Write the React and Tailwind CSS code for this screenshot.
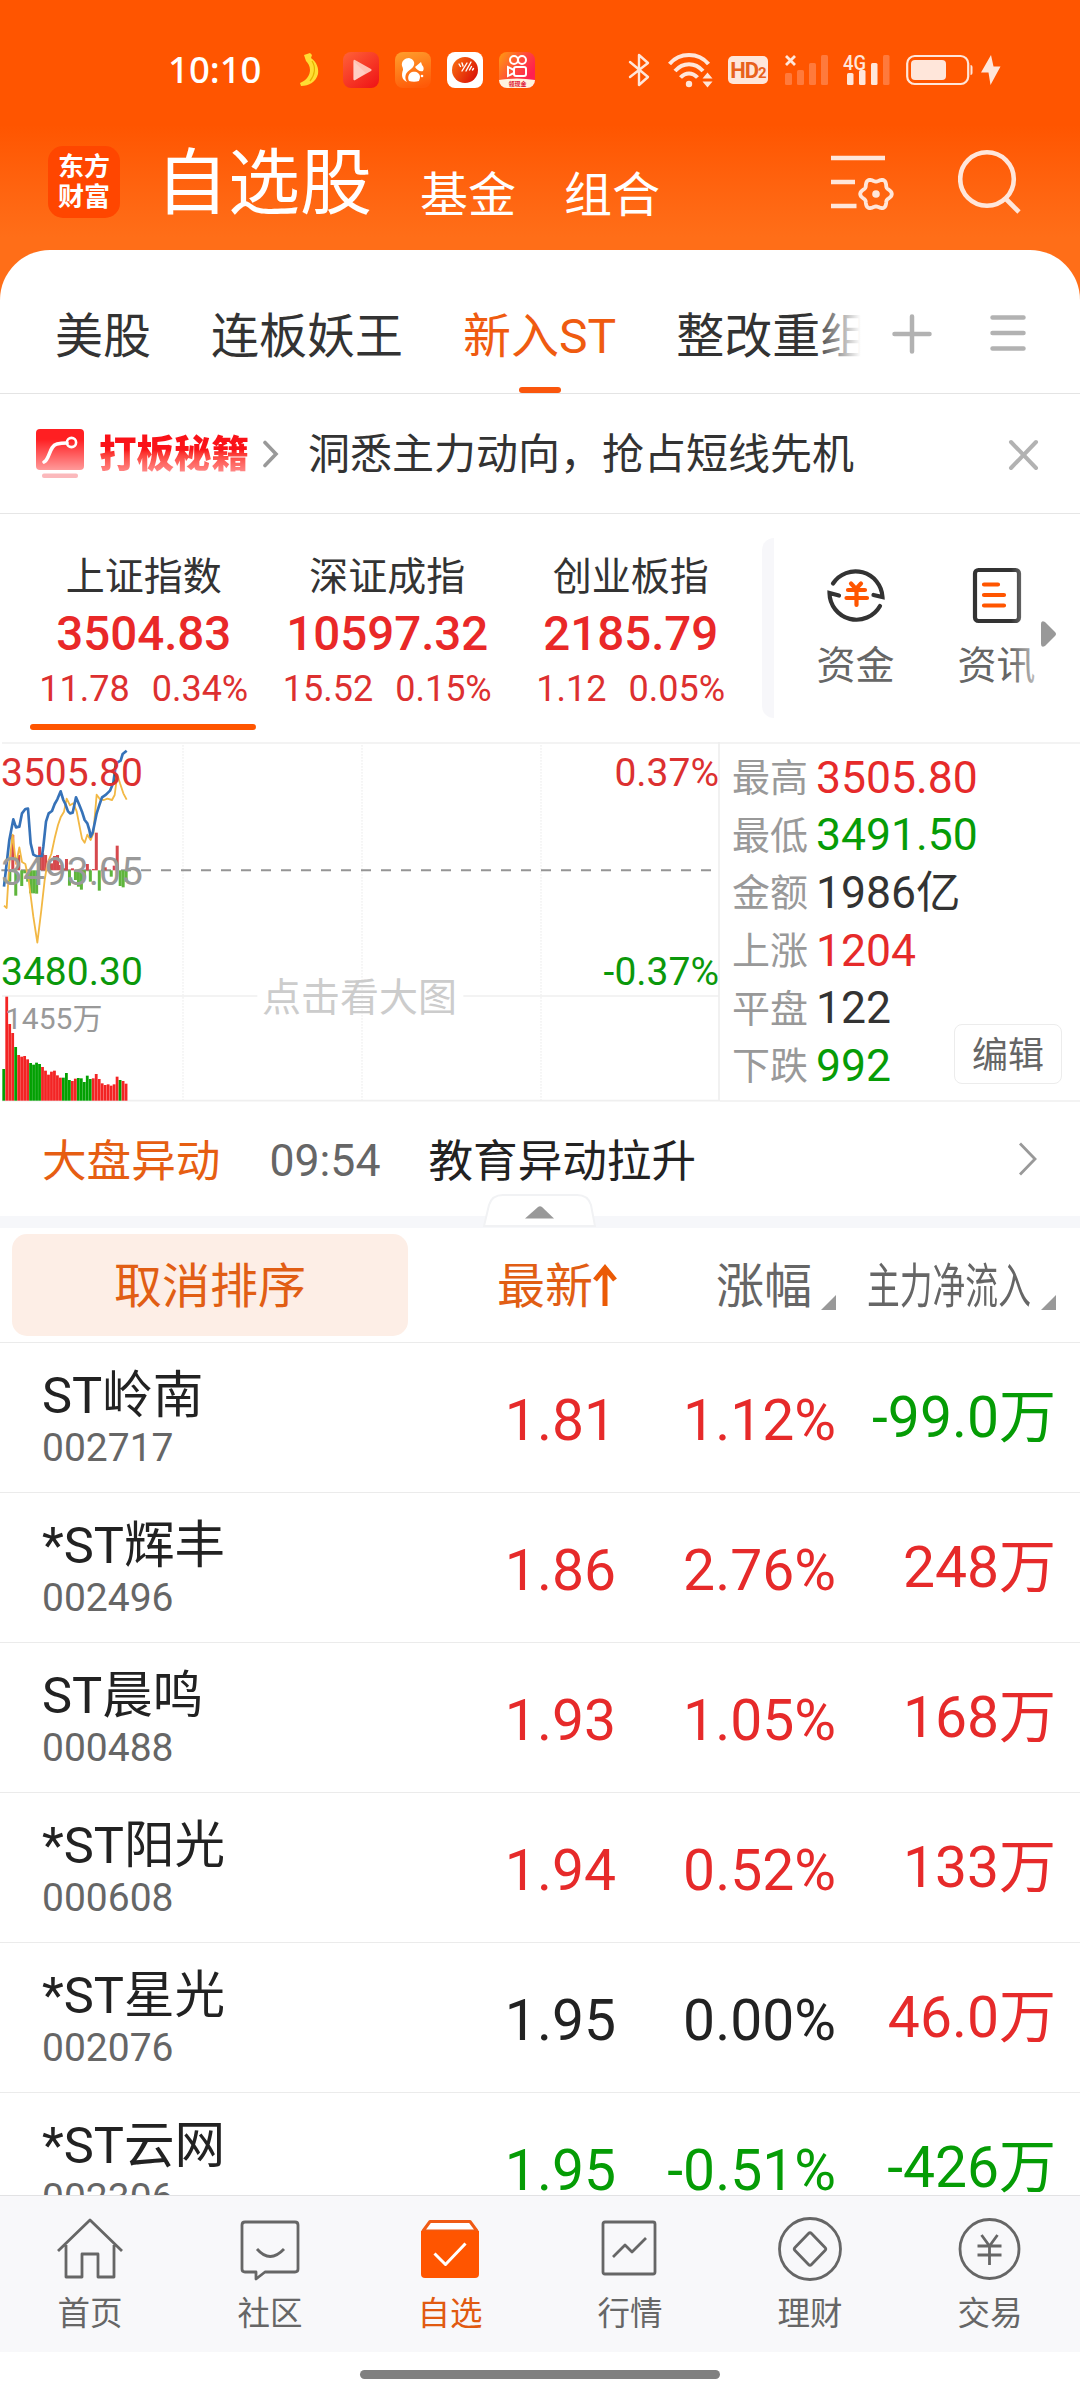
const TABS = ['美股', '连板妖王', '新入ST', '整改重组']

const INDICES = [
  { name: '上证指数', value: '3504.83', diff: '11.78', pct: '0.34%', active: true },
  { name: '深证成指', value: '10597.32', diff: '15.52', pct: '0.15%' },
  { name: '创业板指', value: '2185.79', diff: '1.12', pct: '0.05%' },
]

const STATS = [
  { label: '最高', value: '3505.80', color: 'text-[#e62a2a]' },
  { label: '最低', value: '3491.50', color: 'text-[#069c06]' },
  { label: '金额', value: '1986亿', color: 'text-[#333]' },
  { label: '上涨', value: '1204', color: 'text-[#e62a2a]' },
  { label: '平盘', value: '122', color: 'text-[#333]' },
  { label: '下跌', value: '992', color: 'text-[#069c06]' },
]

const RED = 'text-[#e62a2a]'
const GREEN = 'text-[#059c05]'
const BLACK = 'text-[#222]'

const STOCKS = [
  { name: 'ST岭南', code: '002717', price: '1.81', pct: '1.12%', flow: '-99.0万', color: RED, flowColor: GREEN },
  { name: '*ST辉丰', code: '002496', price: '1.86', pct: '2.76%', flow: '248万', color: RED, flowColor: RED },
  { name: 'ST晨鸣', code: '000488', price: '1.93', pct: '1.05%', flow: '168万', color: RED, flowColor: RED },
  { name: '*ST阳光', code: '000608', price: '1.94', pct: '0.52%', flow: '133万', color: RED, flowColor: RED },
  { name: '*ST星光', code: '002076', price: '1.95', pct: '0.00%', flow: '46.0万', color: BLACK, flowColor: RED },
  { name: '*ST云网', code: '002306', price: '1.95', pct: '-0.51%', flow: '-426万', color: GREEN, flowColor: GREEN },
]

// [direction, height] per minute, chart units
const VOLUME = [
  ['g', 95], ['r', 312], ['r', 230], ['r', 203], ['g', 161], ['r', 137], ['r', 132], ['r', 134], ['r', 124],
  ['g', 113], ['g', 108], ['g', 114], ['g', 110], ['r', 101], ['r', 90], ['r', 78], ['r', 87], ['r', 90],
  ['r', 76], ['r', 69], ['g', 69], ['g', 83], ['g', 62], ['r', 59], ['r', 66], ['g', 68], ['g', 67],
  ['g', 56], ['g', 75], ['g', 65], ['r', 67], ['r', 80], ['r', 65], ['r', 52], ['r', 47], ['r', 49],
  ['r', 45], ['r', 49], ['r', 72], ['g', 62], ['r', 59], ['r', 51],
]

const MOMENTUM = [
  0, 0, -34, 106, -76, 46, -47, -9, -34, -69, -69, -70, 71, 51, 46, 26, 21, 43, 46, 16, 6,
  34, -46, 6, -29, -49, -58, -19, 19, -34, 4, 113, -61, 0, 9, 0, -19, 14, 74, -47, -51, -34,
]

const PRICE_LINE =
  '12,470 20,400 28,330 40,268 48,292 58,290 66,250 76,237 84,236 92,340 100,374 112,380 126,378 130,350 138,275 146,250 156,243 164,222 172,208 182,184 190,210 196,222 204,244 210,250 218,248 228,202 238,225 246,245 254,270 262,280 268,300 272,320 278,308 284,280 290,250 298,225 306,202 318,194 330,182 340,158 348,100 362,92 368,72 380,62'

const AVG_LINE =
  '12,527 20,534 28,400 38,314 48,402 58,352 66,396 76,402 86,450 100,560 112,638 124,540 134,450 142,400 154,372 164,325 174,285 182,262 192,245 200,206 210,226 220,220 230,244 240,296 246,326 254,338 262,314 272,330 280,310 290,194 300,208 312,210 322,206 336,210 344,195 352,134 360,160 370,190 380,209'

// six-lobed outline of the settings gear
const GEAR = Array.from({ length: 72 }, (_, i) => {
  const a = (i * Math.PI) / 36
  const r = 14.1 + 1.7 * Math.cos(6 * a)
  return `${(45 + r * Math.cos(a)).toFixed(1)},${(40 + r * Math.sin(a)).toFixed(1)}`
}).join(' ')

function StatusBar() {
  return (
    <div className="flex h-[139px] items-center pl-[168px] text-[#ffe6da]">
      <span className="w-[131px] font-['Noto_Sans',sans-serif] text-[36.500px] font-medium leading-none text-white">10:10</span>
      <svg className="h-[36px] w-[20px]" viewBox="0 0 20 36">
        <path d="M5 3l6-2 2 2-1 3c6 4 8 11 7 16-2 8-9 12-17 12l-1-3c7-3 10-8 10-13 0-4-2-7-4-9z" fill="#ffdd33" />
        <path d="M13 9c4 6 3 14-2 20" stroke="#e5b400" strokeWidth="1.2" fill="none" />
      </svg>
      <svg className="ml-[24px] h-[36px] w-[36px]" viewBox="0 0 36 36">
        <defs>
          <linearGradient id="play" x1="0" y1="0" x2="0.8" y2="1">
            <stop offset="0" stopColor="#ff6238" />
            <stop offset="1" stopColor="#f01818" />
          </linearGradient>
        </defs>
        <rect width="36" height="36" rx="8" fill="url(#play)" />
        <path d="M12 8q-1.500-1-1.500 1v18q0 2 1.500 1l16-9q1.500-1 0-2z" fill="#ffc2b4" />
        <path d="M10.500 9l12 12-10 7q-2 1-2-1z" fill="#ffe0d8" opacity=".45" />
      </svg>
      <svg className="ml-[16px] h-[36px] w-[36px]" viewBox="0 0 36 36">
        <defs>
          <linearGradient id="uc" x1="0.3" y1="0" x2="0.6" y2="1">
            <stop offset="0" stopColor="#ff9a2a" />
            <stop offset="1" stopColor="#ff5a08" />
          </linearGradient>
        </defs>
        <rect width="36" height="36" rx="8" fill="url(#uc)" />
        <path d="M7 14c-1-5 3-8 7-8 4 1 6 4 5 7-1 4-6 5-8 9-1 3-1 5 1 8-5-2-6-7-4-12 0-1 0-2-1-4z" fill="#fff" />
        <path d="M20 15l6-5 1 3c2 2 2 4 1 6-3 1-6-1-8-4z" fill="#fff" />
        <path d="M14 29c-2-4 0-8 3-9 4-1 8 1 8 5 0 2-1 3-1 4-3 1-7 1-10 0z" fill="#fff" />
        <circle cx="27" cy="24" r="1.300" fill="#fff" />
      </svg>
      <svg className="ml-[16px] h-[36px] w-[36px]" viewBox="0 0 36 36">
        <defs>
          <linearGradient id="disc" x1="0" y1="0.2" x2="1" y2="0.8">
            <stop offset="0" stopColor="#f96a10" />
            <stop offset="1" stopColor="#d80f08" />
          </linearGradient>
        </defs>
        <rect width="36" height="36" rx="8" fill="#fff" />
        <circle cx="18" cy="18" r="13" fill="url(#disc)" />
        <path d="M12 12l1.500 2.500M15 11l1 3M15 19l5-8M19 19l5-9M22.500 18l2-3.500M25.500 18l1-1.500" stroke="#fff" strokeWidth="1.400" strokeLinecap="round" />
      </svg>
      <svg className="ml-[16px] h-[36px] w-[36px]" viewBox="0 0 36 36">
        <defs>
          <linearGradient id="ks" x1="0" y1="0" x2="0.9" y2="0.6">
            <stop offset="0" stopColor="#ff9d10" />
            <stop offset="0.6" stopColor="#ff4a3a" />
            <stop offset="1" stopColor="#ff2050" />
          </linearGradient>
        </defs>
        <rect width="36" height="36" rx="8" fill="url(#ks)" />
        <path d="M0 28q18-3 36 0a8 8 0 0 1-8 8H8a8 8 0 0 1-8-8z" fill="#fff3dd" />
        <g fill="none" stroke="#fff" strokeWidth="2">
          <circle cx="15" cy="8" r="4" />
          <circle cx="23" cy="8" r="4" />
          <rect x="15" y="15" width="12" height="9" rx="2" />
          <path d="M15 18l-6-3v9l6-3" />
        </g>
        <text x="9.500" y="33.500" fontSize="6" fontWeight="700" fill="#e0203a">领现金</text>
      </svg>

      <svg className="ml-[93px] h-[34px] w-[22px]" viewBox="0 0 22 34" fill="none" stroke="currentColor" strokeWidth="2.400" strokeLinejoin="round" strokeLinecap="round">
        <path d="M2 9l18 15-9 8V2l9 8L2 24" />
      </svg>
      <svg className="ml-[18px] h-[36px] w-[46px]" viewBox="0 0 46 36" fill="none" stroke="currentColor" strokeWidth="4">
        <path d="M1.500 12c10-12 29-12 39 0M7 19c8-9 20-9 28 0M12.500 25.500c5-5.500 12-5.500 17 0" />
        <circle cx="21" cy="32" r="3.200" fill="currentColor" stroke="none" />
        <path d="M34.500 26.500l5-6 5 6zM34.500 29.500l5 6 5-6z" fill="currentColor" stroke="none" />
      </svg>
      <span className="ml-[14px] flex h-[28px] w-[40px] items-baseline justify-center rounded-[5px] bg-[#ffe6da] font-['Roboto'] text-[22px] font-bold leading-[29px] tracking-[-1px] text-[#e8611c]">
        HD<span className="text-[15px]">2</span>
      </span>
      <svg className="ml-[17px] h-[32px] w-[43px]" viewBox="0 0 43 32">
        <path d="M1 2l9 9M10 2l-9 9" stroke="currentColor" strokeWidth="2.800" />
        <g fill="#ff7a3c">
          <rect x="0" y="19" width="7" height="12" rx="1.500" />
          <rect x="12" y="16" width="7" height="15" rx="1.500" />
          <rect x="24" y="9" width="7" height="22" rx="1.500" />
          <rect x="36" y="1" width="7" height="30" rx="1.500" />
        </g>
      </svg>
      <svg className="ml-[15px] h-[34px] w-[47px]" viewBox="0 0 47 34">
        <text x="0" y="16.500" textLength="23" lengthAdjust="spacingAndGlyphs" fontFamily="Roboto" fontWeight="500" fontSize="21" fill="currentColor">4G</text>
        <g fill="currentColor">
          <rect x="4" y="20" width="6.500" height="12" rx="1.500" />
          <rect x="16" y="17" width="6.500" height="15" rx="1.500" />
          <rect x="28" y="10" width="6.500" height="22" rx="1.500" />
          <rect x="40" y="2" width="6.500" height="30" rx="1.500" fill="#ff7a3c" />
        </g>
      </svg>
      <svg className="ml-[16px] h-[32px] w-[95px]" viewBox="0 0 95 32">
        <rect x="1.200" y="2" width="61" height="28" rx="7.500" fill="none" stroke="currentColor" strokeWidth="2.200" />
        <rect x="5" y="6" width="35" height="20" rx="4" fill="currentColor" />
        <path d="M64.500 11q2 0 2 2v6q0 2-2 2z" fill="currentColor" />
        <path d="M85 1L75 18.500h7.500L84.500 31l10-18.500h-7z" fill="currentColor" />
      </svg>
    </div>
  )
}

function Header() {
  return (
    <div className="flex h-[111px] items-start pl-[48px] text-white">
      <div className="mt-[7px] grid h-[72px] w-[72px] place-content-center rounded-[15px] bg-[#ff4600] text-center text-[26px] font-bold leading-[30px]">
        <span>东方</span>
        <span>财富</span>
      </div>
      <span className="ml-[36px] mt-[9px] text-[72px] leading-none">自选股</span>
      <span className="ml-[48px] mt-[33px] text-[48px] leading-none">基金</span>
      <span className="ml-[48px] mt-[33px] text-[48px] leading-none">组合</span>
      <svg className="ml-[171px] mt-[15px] h-[58px] w-[64px]" viewBox="0 0 64 58" fill="none" stroke="#ffe6da" strokeWidth="4.500">
        <path d="M0 4h54M0 28h24M0 52h25.500" />
        <polygon points={GEAR} strokeWidth="3.800" strokeLinejoin="round" />
        <circle cx="45" cy="40" r="3.800" fill="#ffe6da" stroke="none" />
      </svg>
      <svg className="ml-[63px] mt-[10px] h-[66px] w-[64px]" viewBox="0 0 64 66" fill="none" stroke="#ffe6da" strokeWidth="4.600">
        <circle cx="29" cy="30" r="26.800" />
        <path d="M47.500 49.500L61 63" />
      </svg>
    </div>
  )
}

function TabStrip() {
  return (
    <div className="bg-[#ff6e18]">
      <div className="flex h-[144px] items-start rounded-t-[50px] border-b border-[#e4e4e4] bg-white">
        <div className="relative flex h-[143px] w-[866px] gap-[60px] overflow-hidden whitespace-nowrap pl-[55px]">
          {TABS.map(tab => (
            <div
              key={tab}
              className={tab === '新入ST' ? 'relative pt-[63px] text-[48px] leading-none text-[#ef5b10]' : 'pt-[63px] text-[48px] leading-none text-[#333]'}
            >
              {tab}
              {tab === '新入ST' && <span className="absolute bottom-0 left-1/2 h-[6px] w-[42px] -translate-x-1/2 rounded-full bg-[#fa560c]" />}
            </div>
          ))}
          <div className="absolute right-0 top-0 h-full w-[52px] bg-linear-to-r from-white/0 to-white to-90%" />
        </div>
        <svg className="ml-[26px] mt-[64px] h-[40px] w-[40px]" viewBox="0 0 40 40" stroke="#b2b2b2" strokeWidth="4.500" strokeLinecap="round">
          <path d="M20 2.500v35M2.500 20h35" />
        </svg>
        <svg className="ml-[58px] mt-[64px] h-[38px] w-[36px]" viewBox="0 0 36 38" stroke="#b2b2b2" strokeWidth="4.500" strokeLinecap="round">
          <path d="M2.500 3.500h31M2.500 19h31M2.500 34.500h31" />
        </svg>
      </div>
    </div>
  )
}

function Banner() {
  return (
    <div className="flex h-[120px] items-center border-b border-[#e6e6e6] pl-[36px] pr-[41px]">
      <svg className="mt-[1px] h-[50px] w-[48px]" viewBox="0 0 48 50" fill="none">
        <defs>
          <linearGradient id="secret" x1="0" y1="0" x2="0" y2="1">
            <stop offset="0.25" stopColor="#ff1f22" />
            <stop offset="1" stopColor="#ff9a9a" />
          </linearGradient>
        </defs>
        <rect width="48" height="41" rx="4" fill="url(#secret)" />
        <rect x="6" y="44.500" width="36" height="4.500" rx="2" fill="#fbb9bc" />
        <path d="M8 33c6-3 5-16 13-18 4-1 7-1 10-1" stroke="#fff" strokeWidth="3.600" strokeLinecap="round" />
        <circle cx="35.500" cy="13.500" r="4.600" stroke="#fff" strokeWidth="2.600" />
      </svg>
      <span className="ml-[15px] bg-linear-to-b from-[#fa1218] from-40% to-[#ff8a8a] to-95% bg-clip-text text-[37.500px] font-black leading-[42px] text-transparent">
        打板秘籍
      </span>
      <svg className="ml-[13px] h-[28px] w-[18px]" viewBox="0 0 18 28" fill="none" stroke="#999" strokeWidth="3.600" strokeLinecap="round">
        <path d="M3 2.500L14 14 3 25.500" />
      </svg>
      <span className="ml-[28px] mt-[2px] text-[42px] leading-none text-[#333]">洞悉主力动向，抢占短线先机</span>
      <svg className="ml-auto mt-[2px] h-[32px] w-[31px]" viewBox="0 0 31 32" stroke="#b2b2b2" strokeWidth="4" strokeLinecap="round">
        <path d="M3 3l25 26M28 3L3 29" />
      </svg>
    </div>
  )
}

function Indices() {
  return (
    <div className="flex h-[229px] pl-[21px]">
      {INDICES.map(x => (
        <div key={x.name} className="relative flex w-[243.500px] flex-col items-center pl-[2px] pt-[43px] text-[#e92828]">
          <span className="text-[39px] leading-[40px] text-[#333]">{x.name}</span>
          <span className="mt-[12px] text-[47.500px] font-medium leading-[50px]">{x.value}</span>
          <span className="mt-[9px] flex gap-[22px] text-[36px] leading-[42px] text-[#dd3030]">
            <span>{x.diff}</span>
            <span>{x.pct}</span>
          </span>
          {x.active && <span className="absolute bottom-[13px] left-[9px] h-[6px] w-[226px] rounded-full bg-[#ff5500]" />}
        </div>
      ))}
      <div className="ml-[10px] mt-[24px] h-[180px] w-[12px] rounded-l-[12px] bg-[#f7f7fa]" />
      <div className="ml-[43px] mt-[49px] flex w-[78px] flex-col items-center">
        <svg className="h-[62px] w-[60px]" viewBox="0 0 60 62" fill="none" strokeLinecap="round">
          <g stroke="#333" strokeWidth="4.200">
            <path d="M7 20.500A27 27 0 0 1 56.500 34L47.500 32" />
            <path d="M54 43A27 27 0 0 1 3.500 30L13 32.500" />
          </g>
          <path d="M25 20.500l5 5.500 5-5.500M22 27h17M20.500 35h20.500M30.500 27v15" stroke="#ff5500" strokeWidth="4.200" />
        </svg>
        <span className="mt-[19px] text-[39px] leading-[44px] text-[#666]">资金</span>
      </div>
      <div className="relative ml-[62px] mt-[49px] flex w-[80px] flex-col items-center">
        <svg className="h-[62px] w-[50px]" viewBox="0 0 50 62" fill="none">
          <rect x="3" y="7" width="44" height="51" rx="3.500" stroke="#333" strokeWidth="4.200" />
          <path d="M12 21.500h14M12 32h20M12 42.500h20" stroke="#ff5500" strokeWidth="4.200" strokeLinecap="round" />
        </svg>
        <span className="mt-[19px] text-[39px] leading-[44px] text-[#666]">资讯</span>
        <span className="absolute right-0 top-0 h-full w-[26px] bg-linear-to-r from-white/0 to-white/60" />
      </div>
      <svg className="ml-[4px] mt-[107px] h-[26px] w-[15px]" viewBox="0 0 15 26" fill="#999">
        <path d="M0 3q0-4 4-2l10 10q2 2 0 4L4 25q-4 2-4-2z" />
      </svg>
    </div>
  )
}

function MinuteChart() {
  return (
    <div className="relative h-full w-[720px] text-[39px] leading-[40px]">
      <svg className="h-[360px] w-[720px]" viewBox="0 36 2160 1080" fill="none">
        <path d="M6 39H2160M6 798H772M1390 798H2157M6 1112H2160M2157 36V1114" stroke="#efefef" strokeWidth="5" />
        <path d="M549 45V1110M1086 45V1110M1623 45V1110" stroke="#f1f1f1" strokeWidth="4" strokeDasharray="5 4" />
        <path d="M4 421H2148" stroke="#959595" strokeWidth="6" strokeDasharray="30 30" strokeDashoffset="1" />
        {MOMENTUM.map((v, i) => (
          <rect key={i} x={7 + i * 8.95} y={v > 0 ? 421 - v : 421} width="9" height={Math.abs(v)} fill={v > 0 ? '#d6494d' : '#5fb53c'} />
        ))}
        {VOLUME.map(([dir, h], i) => (
          <rect key={i} x={7 + i * 8.95} y={1112 - h} width="8.400" height={h} fill={dir === 'r' ? '#f32424' : '#02a002'} />
        ))}
        <polyline points={AVG_LINE} stroke="#f2b844" strokeWidth="5.500" strokeLinejoin="round" />
        <polyline points={PRICE_LINE} stroke="#3672b8" strokeWidth="8" strokeLinejoin="round" />
      </svg>
      <span className="absolute left-[1px] top-[11px] text-[#dc3030]">3505.80</span>
      <span className="absolute left-[1px] top-[110px] text-[#999]">3493.05</span>
      <span className="absolute left-[1px] top-[210px] text-[#0b980b]">3480.30</span>
      <span className="absolute right-[1px] top-[11px] text-[#dc3030]">0.37%</span>
      <span className="absolute right-[1px] top-[210px] text-[#0b980b]">-0.37%</span>
      <span className="absolute left-[5px] top-[257px] text-[30px] text-[#999]">1455万</span>
      <span className="absolute left-[262px] top-[236px] text-[39px] text-[#ccc]">点击看大图</span>
    </div>
  )
}

function StatsPanel() {
  return (
    <div className="relative flex-1 border-y-2 border-[#f3f3f3] pl-[12px] pt-[5px]">
      {STATS.map(s => (
        <div key={s.label} className="flex h-[57.700px] items-center">
          <span className="w-[84px] text-[38px] leading-none text-[#999]">{s.label}</span>
          <span className={`text-[44.500px] leading-none ${s.color}`}>{s.value}</span>
        </div>
      ))}
      <button className="absolute bottom-[16px] right-[18px] h-[60px] w-[108px] rounded-[8px] border border-[#ececec] pt-[4px] text-[36px] leading-none text-[#666]">
        编辑
      </button>
    </div>
  )
}

function AlertRow() {
  return (
    <div className="relative flex h-[126px] items-start border-b-[12px] border-[#f6f7fa] pl-[42px] text-[44.600px] leading-none">
      <span className="mt-[38px] text-[#e65e12]">大盘异动</span>
      <span className="ml-[49px] mt-[37px] text-[#666]">09:54</span>
      <span className="ml-[48px] mt-[38px] text-[#222]">教育异动拉升</span>
      <svg className="ml-auto mr-[42px] mt-[40px] h-[34px] w-[20px]" viewBox="0 0 20 34" fill="none" stroke="#999" strokeWidth="2.800">
        <path d="M2 1.500L17 17 2 32.500" />
      </svg>
      <svg className="absolute left-[483px] top-[91px] h-[35px] w-[113px]" viewBox="0 0 113 35">
        <path d="M1 33L6 12Q9 2 20 2H94Q105 2 108 12L112 33z" fill="#fff" stroke="#f1f2f4" strokeWidth="2" />
        <path d="M42 25.500L55 14Q57 12.500 59 14L71 25.500z" fill="#999" />
      </svg>
    </div>
  )
}

function SortMark() {
  return (
    <svg className="h-[15px] w-[15px]" viewBox="0 0 15 15" fill="#999">
      <path d="M15 0v15H0z" />
    </svg>
  )
}

function TableHead() {
  return (
    <div className="flex h-[115px] items-start border-b border-[#ebebeb] pl-[12px] text-[48px] leading-none text-[#666]">
      <div className="mt-[6px] flex h-[102px] w-[396px] items-center justify-center rounded-[15px] bg-[#fdeee6] pt-[3px] text-[#e15e14]">取消排序</div>
      <span className="ml-[89px] mt-[35px] text-[#e15e14]">最新</span>
      <svg className="mt-[36px] h-[44px] w-[24px]" viewBox="0 0 24 44" fill="none" stroke="#eb5a05" strokeWidth="5">
        <path d="M12 42V5M2 16L12 4l10 12" />
      </svg>
      <span className="ml-[99px] mt-[35px]">涨幅</span>
      <div className="ml-[9px] mt-[67px]"><SortMark /></div>
      <div className="ml-[31px] mt-[35px] w-[165px]">
        <span className="inline-block origin-left scale-x-[0.683] whitespace-nowrap">主力净流入</span>
      </div>
      <div className="ml-[9px] mt-[67px]"><SortMark /></div>
    </div>
  )
}

function StockRow({ stock }) {
  return (
    <div className="flex h-[150px] shrink-0 items-start border-b border-[#ebebeb] pl-[42px] pr-[24px] text-[57px] leading-[60px]">
      <div className="flex w-[300px] flex-col">
        <span className="mt-[23px] text-[50.600px] text-[#222]">{stock.name}</span>
        <span className="mt-[2px] text-[39px] leading-[40px] text-[#666]">{stock.code}</span>
      </div>
      <span className={`mt-[48px] w-[274px] text-right ${stock.color}`}>{stock.price}</span>
      <span className={`mt-[48px] w-[220px] text-right ${stock.color}`}>{stock.pct}</span>
      <span className={`mt-[45px] flex-1 text-right ${stock.flowColor}`}>{stock.flow}</span>
    </div>
  )
}

const NAV = [
  {
    label: '首页',
    icon: <path d="M2 34L34 3l32 31M10 28v32h16V37h16v23h16V28" />,
  },
  {
    label: '社区',
    icon: <path d="M9 5h50q3 0 3 3v44q0 3-3 3H29l-9 7v-7H9q-3 0-3-3V8q0-3 3-3zM21 32q13 15 27 0" />,
  },
  {
    label: '自选',
    active: true,
    icon: (
      <>
        <path d="M7 14L14 4.500h40L61 14z" fill="#fff" stroke="#f05a14" strokeWidth="3" />
        <path d="M5 14h58v43q0 4-4 4H9q-4 0-4-4z" fill="#ff5500" stroke="none" />
        <path d="M18.500 36.500l11 11 20-21" stroke="#fff" strokeWidth="3" />
      </>
    ),
  },
  {
    label: '行情',
    icon: <path d="M9 5h48q2 0 2 2v48q0 2-2 2H9q-2 0-2-2V7q0-2 2-2zM17 40l12-12 7 7 14-14" />,
  },
  {
    label: '理财',
    icon: (
      <>
        <circle cx="34" cy="32" r="30.500" />
        <path d="M35.500 16.500L49 30.500q1.500 1.500 0 3L35.500 47.500q-1.500 1.500-3 0L19 33.500q-1.500-1.500 0-3l13.500-14q1.500-1.500 3 0z" />
      </>
    ),
  },
  {
    label: '交易',
    icon: (
      <>
        <circle cx="33.500" cy="32" r="29.500" />
        <path d="M25.500 18l8 11 8-11M21.500 29h24M21.500 38h24M33.500 29v19" />
      </>
    ),
  },
]

function BottomNav() {
  return (
    <div className="grid h-[157px] grid-cols-6 border-t border-[#e2e2e4] bg-[#f8f8fa]">
      {NAV.map(item => (
        <div key={item.label} className={item.active ? 'flex flex-col items-center text-[#e15a10]' : 'flex flex-col items-center text-[#666]'}>
          <svg className="mt-[21px] h-[66px] w-[68px]" viewBox="0 0 68 66" fill="none" stroke="currentColor" strokeWidth="2.800" strokeLinejoin="round">
            {item.icon}
          </svg>
          <span className="mt-[14px] text-[32.500px] leading-[34px]">{item.label}</span>
        </div>
      ))}
    </div>
  )
}

export default function App() {
  return (
    <div className="flex h-[2400px] w-[1080px] flex-col overflow-hidden bg-white font-['Roboto','Noto_Sans_CJK_SC',sans-serif]">
      <div className="h-[250px] shrink-0 bg-linear-to-b from-[#ff5500] from-50% to-[#ff6e18] to-95%">
        <StatusBar />
        <Header />
      </div>
      <TabStrip />
      <Banner />
      <Indices />
      <div className="-mt-[1px] flex h-[360px] shrink-0">
        <MinuteChart />
        <StatsPanel />
      </div>
      <AlertRow />
      <TableHead />
      <div className="flex min-h-0 flex-1 flex-col overflow-hidden">
        {STOCKS.map(stock => (
          <StockRow key={stock.code} stock={stock} />
        ))}
      </div>
      <BottomNav />
      <div className="flex h-[48px] shrink-0 justify-center bg-white pt-[18px]">
        <div className="h-[9px] w-[360px] rounded-full bg-[#808080]" />
      </div>
    </div>
  )
}
